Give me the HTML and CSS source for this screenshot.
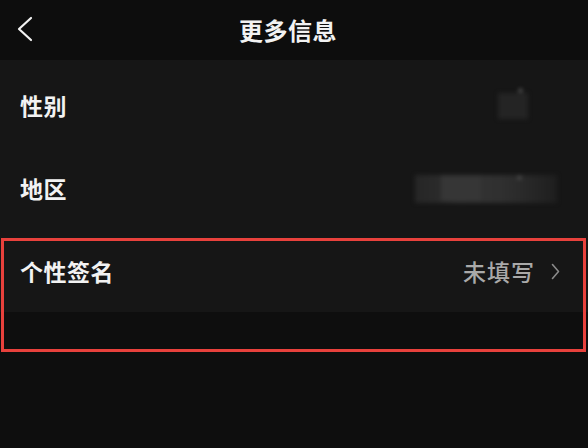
FILE: index.html
```html
<!DOCTYPE html>
<html lang="zh">
<head>
<meta charset="utf-8">
<title>更多信息</title>
<link rel="stylesheet" href="styles.css">
</head>
<body>
<div class="screen">
  <header class="topbar">
    <div class="back">
      <svg width="16" height="26" viewBox="0 0 16 26"><polyline points="14,2 2,13 14,24" fill="none" stroke="#f2f2f2" stroke-width="2.2" stroke-linecap="round" stroke-linejoin="round"/></svg>
    </div>
    <div class="title">更多信息</div>
    <div></div>
  </header>
  <main class="list">
    <div class="row">
      <span class="label">性别</span>
      <span class="value"><span class="blur blur-a"><i class="dot"></i></span></span>
    </div>
    <div class="row">
      <span class="label">地区</span>
      <span class="value"><span class="blur blur-b"><i class="seg"></i><i class="dot dot-b"></i></span></span>
    </div>
    <div class="row">
      <span class="label">个性签名</span>
      <span class="value value-text">未填写
        <svg class="chev" width="9" height="17" viewBox="0 0 9 17"><polyline points="1.5,1.5 7.5,8.5 1.5,15.5" fill="none" stroke="#8a8a8a" stroke-width="1.6" stroke-linecap="round" stroke-linejoin="round"/></svg>
      </span>
    </div>
  </main>
  <div class="rest"></div>
  <div class="highlight"></div>
</div>
</body>
</html>
```
FILE: styles.css
```css
html, body {
  margin: 0;
  padding: 0;
  background: #0e0e0e;
}
.screen {
  position: relative;
  width: 588px;
  height: 448px;
  overflow: hidden;
  font-family: "Noto Sans CJK SC", "Noto Sans", sans-serif;
  color: #f2f2f2;
  display: flex;
  flex-direction: column;
}
.topbar {
  height: 60px;
  background: #0d0d0d;
  display: grid;
  grid-template-columns: 48px 1fr 60px;
  align-items: center;
}
.back {
  display: flex;
  align-items: center;
  padding-left: 17px;
  padding-bottom: 3px;
}
.title {
  text-align: center;
  font-size: 24px;
  font-weight: 700;
  letter-spacing: 0.5px;
  line-height: 1;
  padding-bottom: 1px;
}
.list {
  background: #161616;
  padding-top: 4px;
  height: 252px;
  box-sizing: border-box;
}
.row {
  height: 83px;
  display: flex;
  align-items: center;
  justify-content: space-between;
  padding: 0 28px 0 20px;
}
.label {
  font-size: 23px;
  font-weight: 700;
  letter-spacing: 0.5px;
  line-height: 1;
}
.value {
  display: flex;
  align-items: center;
}
.value-text {
  font-size: 23px;
  font-weight: 500;
  color: #a9a9a9;
  letter-spacing: 1px;
  gap: 16px;
  line-height: 1;
}
.chev {
  display: block;
}
.blur {
  position: relative;
  display: block;
  background: #262626;
  filter: blur(2px);
}
.blur-a {
  width: 30px;
  height: 26px;
  margin-right: 32px;
  background: #242424;
}
.blur-b {
  width: 142px;
  height: 28px;
  margin-right: 3px;
  background: linear-gradient(90deg, #262626 0%, #2b2b2b 20%, #333 30%, #303030 60%, #2a2a2a 75%, #1e1e1e 100%);
}
.seg {
  position: absolute;
  left: 26px;
  top: 0;
  width: 40px;
  height: 26px;
  background: #363636;
}
.dot {
  position: absolute;
  right: 6px;
  top: -4px;
  width: 3px;
  height: 3px;
  border-radius: 50%;
  background: #9a9a9a;
}
.dot-b {
  right: 36px;
  top: 1px;
  background: #777;
}
.rest {
  flex: 1;
  background: #0e0e0e;
}
.highlight {
  position: absolute;
  left: 1px;
  top: 238px;
  width: 585px;
  height: 114px;
  box-sizing: border-box;
  border: 3.5px solid #e8413c;
  pointer-events: none;
}
```
